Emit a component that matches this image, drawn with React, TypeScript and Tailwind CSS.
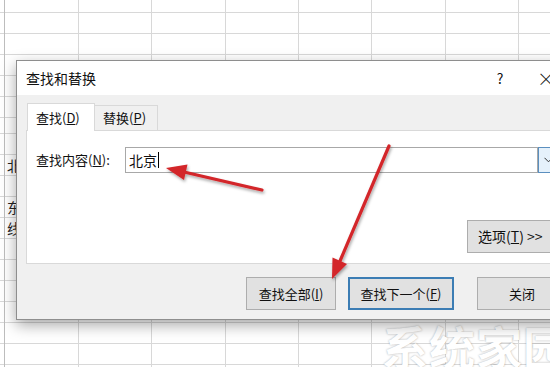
import React from 'react';

const rowHeights = [13, 21, 21, 21, 21, 21, 16, 21, 21, 21, 21, 21, 21, 21, 21, 21, 21, 21, 21];
const colWidths = [5, 74, 73, 74, 73, 73, 74, 73, 73];

const font = { fontFamily: '"Noto Sans CJK SC", "Noto Sans", sans-serif' };

function Sheet() {
  return (
    <>
      {/* rows */}
      <div className="absolute inset-0 flex flex-col">
        {rowHeights.map((h, i) => (
          <div
            key={i}
            className="shrink-0 border-b border-[#d8d8d8] flex items-center pl-[7px] text-[14px] text-[#222]"
            style={{ height: h }}
          >
            {i === 8 ? '北' : i === 10 ? '东' : i === 11 ? '线' : ''}
          </div>
        ))}
      </div>
      {/* columns */}
      <div className="absolute inset-0 flex">
        {colWidths.map((w, i) => (
          <div
            key={i}
            className={`shrink-0 h-full border-r ${i === 0 ? 'border-[#bdbdbd]' : 'border-[#d8d8d8]'}`}
            style={{ width: w }}
          />
        ))}
      </div>
    </>
  );
}

function Btn({ children, className = '' }: { children: React.ReactNode; className?: string }) {
  return (
    <div
      className={`h-[33px] shrink-0 flex items-center justify-center bg-[#e1e1e1] text-[13px] text-[#111] ${className}`}
    >
      {children}
    </div>
  );
}

function Arrows() {
  return (
    <svg className="absolute inset-0 pointer-events-none" width="550" height="367" viewBox="0 0 550 367">
      <defs>
        <filter id="sh" x="-20%" y="-20%" width="140%" height="140%">
          <feDropShadow dx="1" dy="2" stdDeviation="1.5" floodColor="#000" floodOpacity="0.35" />
        </filter>
      </defs>
      <g filter="url(#sh)">
        <line x1="262" y1="190" x2="184" y2="172" stroke="#d3262a" strokeWidth="3.2" strokeLinecap="round" />
        <polygon points="166,168 187.5,164.5 184,180" fill="#d3262a" />
        <line x1="389" y1="146" x2="340" y2="261" stroke="#d3262a" strokeWidth="3.2" strokeLinecap="round" />
        <polygon points="332,279 332.5,257.5 347,264" fill="#d3262a" />
      </g>
    </svg>
  );
}

export default function App() {
  return (
    <div className="relative w-[550px] h-[367px] overflow-hidden bg-white" style={font}>
      <Sheet />

      {/* watermark */}
      <div className="absolute left-[382px] top-[322px] text-[46px] leading-none font-bold text-white tracking-[1px] [text-shadow:0_0_2px_rgba(0,0,0,0.35)] whitespace-nowrap">
        系统家园
      </div>

      {/* dialog */}
      <div className="absolute left-[16px] top-[60px] w-[580px] h-[260px] bg-[#f0f0f0] border border-[#8e8e8e] shadow-[0_5px_14px_rgba(0,0,0,0.35)] flex flex-col">
        <div className="h-[34px] bg-white flex items-center pl-[9px] text-[14px] text-[#111]">
          <span className="flex-1">查找和替换</span>
          <span className="w-[46px] text-center text-[14px]">?</span>
          <span className="w-[46px] text-center text-[18px] font-light mr-[26px]">×</span>
        </div>

        <div className="pt-[8px] pl-[9px] pr-[18px] flex flex-col">
          <div className="h-[27px] flex items-end pl-[1px] text-[13px] text-[#111]">
            <div className="h-[28px] w-[68px] -mb-px bg-white border border-[#d9d9d9] border-b-0 relative z-10 flex items-center pl-[8px]">
              查找(<span className="underline">D</span>)
            </div>
            <div className="h-[25px] w-[63px] border border-[#d9d9d9] border-b-0 border-l-0 bg-[#f0f0f0] flex items-center pl-[8px]">
              替换(<span className="underline">P</span>)
            </div>
          </div>

          <div className="h-[134px] bg-white border border-[#d9d9d9] flex flex-col pt-[16px] pl-[9px]">
            <div className="flex items-center h-[26px] text-[13px] text-[#111]">
              <span className="w-[89px] shrink-0">
                查找内容(<span className="underline">N</span>):
              </span>
              <div className="w-[413px] h-[26px] border border-[#a8a8a8] flex items-center pl-[3px] text-[14px]">
                北京
                <span className="ml-px w-px h-[16px] bg-black" />
              </div>
              <div className="w-[20px] h-[26px] border border-[#5b8fbf] bg-[#e5f1fb] flex items-center justify-center">
                <svg width="9" height="6" viewBox="0 0 9 6">
                  <path d="M0.5 0.8 L4.5 4.8 L8.5 0.8" fill="none" stroke="#333" strokeWidth="1" />
                </svg>
              </div>
            </div>
            <Btn className="ml-[431px] mt-[47px] w-[92px] h-[31px] border border-[#adadad] justify-start pl-[10px] text-[14px]">
              选项(<span className="underline">T</span>) &gt;&gt;
            </Btn>
          </div>

          <div className="flex mt-[13px] pl-[220px]">
            <Btn className="w-[90px] border border-[#adadad]">
              查找全部(<span className="underline">I</span>)
            </Btn>
            <Btn className="w-[106px] ml-[12px] border-2 border-[#3c7db4]">
              查找下一个(<span className="underline">F</span>)
            </Btn>
            <Btn className="w-[90px] ml-[23px] border border-[#adadad]">关闭</Btn>
          </div>
        </div>
      </div>

      <Arrows />
    </div>
  );
}
